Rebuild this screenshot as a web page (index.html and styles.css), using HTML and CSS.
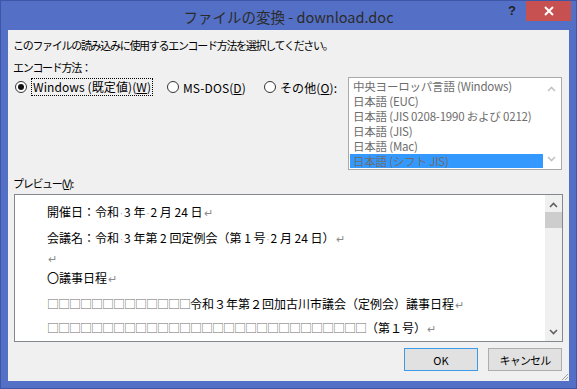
FILE: index.html
```html
<!DOCTYPE html>
<html lang="ja">
<head>
  <meta charset="UTF-8" />
  <title>ファイルの変換 - download.doc</title>
  <link rel="stylesheet" href="styles.css">
</head>
<body>
  <div class="window">
    <!-- Caption bar -->
    <div class="titlebar">
      <div></div>
      <div class="title">ファイルの変換 - download.doc</div>
      <div class="caption-buttons">
        <span class="help">?</span>
        <span class="close">
          <svg width="10" height="10" viewBox="0 0 10 10"><path d="M1 1L9 9M9 1L1 9" stroke="#fff" stroke-width="2"/></svg>
        </span>
      </div>
    </div>

    <div class="client">
      <div class="intro">このファイルの読み込みに使用するエンコード方法を選択してください。</div>
      <div class="enc-label">エンコード方法：</div>

      <div class="enc-row">
        <div class="radios">
          <label class="radio r1">
            <svg width="12" height="12" viewBox="0 0 12 12"><circle cx="6" cy="6" r="5.5" fill="#fff" stroke="#333"/><circle cx="6" cy="6" r="3" fill="#111"/></svg>
            <span class="focus">Windows (既定値)(<u>W</u>)</span>
          </label>
          <label class="radio r2">
            <svg width="12" height="12" viewBox="0 0 12 12"><circle cx="6" cy="6" r="5.5" fill="#fff" stroke="#333"/></svg>
            <span>MS-DOS(<u>D</u>)</span>
          </label>
          <label class="radio r3">
            <svg width="12" height="12" viewBox="0 0 12 12"><circle cx="6" cy="6" r="5.5" fill="#fff" stroke="#333"/></svg>
            <span>その他(<u>O</u>):</span>
          </label>
        </div>

        <div class="listbox">
          <div class="list-items">
            <div class="item">中央ヨーロッパ言語 (Windows)</div>
            <div class="item">日本語 (EUC)</div>
            <div class="item">日本語 (JIS 0208-1990 および 0212)</div>
            <div class="item">日本語 (JIS)</div>
            <div class="item">日本語 (Mac)</div>
            <div class="item selected">日本語 (シフト JIS)</div>
          </div>
          <div class="list-scroll">
            <svg width="9" height="6" viewBox="0 0 9 6"><path d="M1 5L4.5 1.5L8 5" fill="none" stroke="#c4c4c4" stroke-width="1.6"/></svg>
            <svg width="9" height="6" viewBox="0 0 9 6"><path d="M1 1L4.5 4.5L8 1" fill="none" stroke="#c4c4c4" stroke-width="1.6"/></svg>
          </div>
        </div>
      </div>

      <div class="preview-label">プレビュー(<u>V</u>):</div>

      <div class="preview">
        <div class="doc">
          <div class="line l1">開催日：令和<span class="sp">·</span>3 年<span class="sp">·</span>2 月 24 日<span class="ret">↵</span></div>
          <div class="line l2">会議名：令和<span class="sp">·</span>3 年第 2 回定例会（第 1 号<span class="sp">·</span>2 月 24 日）<span class="ret">↵</span></div>
          <div class="line l3"><span class="ret">↵</span></div>
          <div class="line l4">〇議事日程<span class="ret">↵</span></div>
          <div class="line l5"><span class="tofu">□□□□□□□□□□□□□</span>令和３年第２回加古川市議会（定例会）議事日程<span class="ret">↵</span></div>
          <div class="line l6"><span class="tofu">□□□□□□□□□□□□□□□□□□□□□□□□□□□□□</span>（第１号）<span class="ret">↵</span></div>
        </div>
        <div class="vscroll">
          <svg class="arrow" width="9" height="6" viewBox="0 0 9 6"><path d="M1 5L4.5 1.5L8 5" fill="none" stroke="#606060" stroke-width="1.6"/></svg>
          <div class="thumb"></div>
          <div class="track"></div>
          <svg class="arrow" width="9" height="6" viewBox="0 0 9 6"><path d="M1 1L4.5 4.5L8 1" fill="none" stroke="#606060" stroke-width="1.6"/></svg>
        </div>
      </div>

      <div class="buttons">
        <button class="btn default">OK</button>
        <button class="btn">キャンセル</button>
      </div>

      <!-- size grip -->
      <svg class="grip" width="9" height="9" viewBox="0 0 9 9"><path d="M8 2L2 8M8 5L5 8" stroke="#a0a0a0" stroke-width="1"/></svg>
    </div>
  </div>
</body>
</html>
```

FILE: styles.css
```css
* {
  box-sizing: border-box;
}
body {
  margin: 0;
  font-family: "Noto Sans CJK JP", "Noto Sans", sans-serif;
  font-size: 11px;
  color: #000;
}
/* Window frame */
.window {
  width: 577px;
  height: 389px;
  background: #5470c6;
  border: 1px solid #3d56a8;
  display: flex;
  flex-direction: column;
}
.titlebar {
  height: 29px;
  display: grid;
  grid-template-columns: 1fr auto 1fr;
  align-items: center;
}
.title {
  font-size: 14.5px;
  color: #2b2b2b;
  line-height: 29px;
  padding-top: 1px;
}
.caption-buttons {
  display: flex;
  justify-content: flex-end;
  align-self: start;
  padding-right: 5px;
}
.help {
  font-family: "Liberation Sans", sans-serif;
  font-weight: bold;
  font-size: 13px;
  color: #222;
  line-height: 20px;
  margin-right: 10px;
}
.close {
  width: 45px;
  height: 20px;
  background: #c75050;
  display: flex;
  align-items: center;
  justify-content: center;
}
/* Client area */
.client {
  flex: 1;
  margin: 0 7px 7px;
  background: #f0f0f0;
  position: relative;
  display: flex;
  flex-direction: column;
}
.intro,
.enc-label,
.preview-label {
  line-height: 15px;
  padding-left: 5px;
  letter-spacing: -1.3px;
}
.intro {
  margin-top: 8px;
}
.enc-label {
  margin-top: 7px;
}
.enc-row {
  margin-top: 2px;
  display: flex;
  align-items: flex-start;
}
.radios {
  display: flex;
  padding-left: 7px;
  margin-top: 1px;
}
.radio {
  display: flex;
  align-items: center;
  height: 18px;
  gap: 4px;
  font-size: 12px;
  letter-spacing: 0.1px;
}
.radio.r1 { width: 152px; }
.radio.r2 { width: 97px; }
.radio .focus {
  border: 1px dotted #000;
  padding: 0 1px;
  line-height: 16px;
}
/* Encoding list */
.listbox {
  margin-left: auto;
  margin-right: 7px;
  width: 214px;
  height: 93px;
  background: #fff;
  border: 1px solid #a9a9a9;
  padding: 1px;
  display: flex;
}
.list-items {
  flex: 1;
  overflow: hidden;
}
.item {
  height: 15px;
  line-height: 15px;
  padding-left: 3px;
  font-size: 11.5px;
  letter-spacing: -0.2px;
  color: #6d6d6d;
  white-space: nowrap;
  overflow: hidden;
}
.item.selected {
  background: #3399ff;
}
.list-scroll {
  width: 17px;
  display: flex;
  flex-direction: column;
  justify-content: space-between;
  align-items: center;
  padding: 7px 0 6px;
}
/* Preview */
.preview-label {
  margin-top: 6px;
}
.preview {
  margin: 3px 6px 0;
  height: 148px;
  background: #fff;
  border: 1px solid #828790;
  display: flex;
}
.doc {
  flex: 1;
  overflow: hidden;
  padding: 7px 0 0 32px;
  font-size: 12px;
  white-space: nowrap;
}
.line {
  height: 20px;
  line-height: 20px;
}
.line.l2 { margin-top: 6px; }
.line.l5 { margin-top: 6px; }
.line.l6 { margin-top: 4px; }
.sp {
  color: #aaa;
  font-size: 9px;
}
.ret {
  color: #8a8a8a;
  font-size: 11px;
  margin-left: 1px;
}
.tofu {
  color: #6e6e6e;
  letter-spacing: -1px;
}
.vscroll {
  width: 17px;
  background: #f0f0f0;
  display: flex;
  flex-direction: column;
  align-items: center;
}
.vscroll .arrow {
  margin: 7px 0 4px;
}
.vscroll .arrow:last-child {
  margin: 4px 0 6px;
}
.thumb {
  width: 17px;
  height: 16px;
  background: #cdcdcd;
}
.track {
  flex: 1;
}
/* Buttons */
.buttons {
  margin-top: 6px;
  padding-right: 7px;
  display: flex;
  justify-content: flex-end;
  gap: 10px;
}
.btn {
  width: 74px;
  height: 23px;
  font-family: inherit;
  font-size: 11px;
  letter-spacing: -0.8px;
  background: #e1e1e1;
  border: 1px solid #adadad;
  padding: 0;
}
.btn.default {
  border-color: #3c9be8;
  letter-spacing: 0;
}
.grip {
  position: absolute;
  right: 0;
  bottom: 0;
}
```
